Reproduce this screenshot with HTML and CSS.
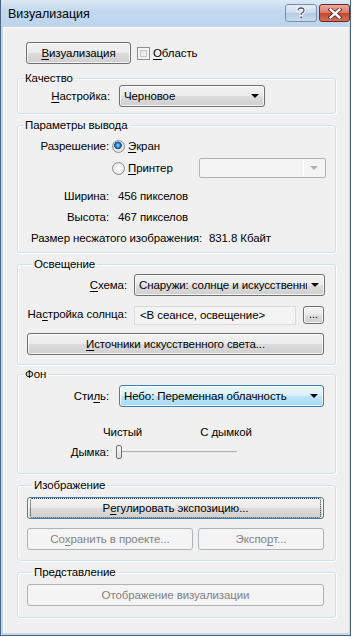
FILE: index.html
```html
<!DOCTYPE html>
<html lang="ru">
<head>
<meta charset="utf-8">
<title>Визуализация</title>
<link rel="stylesheet" href="styles.css">
</head>
<body>
<div class="window">
  <div class="titlebar">
    <span class="title">Визуализация</span>
    <div class="tbtns">
      <div class="tbtn help"><svg width="10" height="12" viewBox="0 0 10 12"><path d="M2 3.5 Q2 1 5 1 Q8 1 8 3.5 Q8 5 6 6 L5.2 6.6 L5.2 8" fill="none" stroke="#fff" stroke-width="3.2" stroke-linecap="round"/><path d="M2 3.5 Q2 1 5 1 Q8 1 8 3.5 Q8 5 6 6 L5.2 6.6 L5.2 8" fill="none" stroke="#3e5672" stroke-width="1.3"/><circle cx="5.2" cy="10.4" r="1.4" fill="#3e5672" stroke="#fff" stroke-width="0.8"/></svg></div>
      <div class="tbtn close"><svg width="14" height="11" viewBox="0 0 14 11"><path d="M2.5 1.5 L11.5 9.5 M11.5 1.5 L2.5 9.5" stroke="#5a1e14" stroke-width="4" stroke-linecap="square"/><path d="M2.5 1.5 L11.5 9.5 M11.5 1.5 L2.5 9.5" stroke="#fff" stroke-width="2.4" stroke-linecap="square"/></svg></div>
    </div>
  </div>
  <div class="client">
    <div class="toprow">
      <button class="btn mainbtn"><u>В</u>изуализация</button>
      <span class="check"></span><span class="checklabel"><u>О</u>бласть</span>
    </div>

    <fieldset class="grp g-quality">
      <legend>Качество</legend>
      <div class="row">
        <span class="lbl lbl-q"><u>Н</u>астройка:</span>
        <div class="combo combo-q"><span>Черновое</span><i class="arrow"></i></div>
      </div>
    </fieldset>

    <fieldset class="grp g-output">
      <legend>Параметры вывода</legend>
      <div class="row r-res">
        <span class="lbl lbl-o">Разрешение:</span>
        <span class="radio on"></span><span class="rlabel"><u>Э</u>кран</span>
      </div>
      <div class="row r-printer">
        <span class="lbl lbl-o"></span>
        <span class="radio"></span><span class="rlabel rl-printer"><u>П</u>ринтер</span>
        <div class="combo disabled combo-p"><span class="inner"></span><i class="arrow"></i></div>
      </div>
      <div class="row r-info r-w">
        <span class="lbl lbl-o">Ширина:</span><span class="val">456 пикселов</span>
      </div>
      <div class="row r-info">
        <span class="lbl lbl-o">Высота:</span><span class="val">467 пикселов</span>
      </div>
      <div class="row r-info r-size">
        <span>Размер несжатого изображения:</span><span class="val2">831.8 Кбайт</span>
      </div>
    </fieldset>

    <fieldset class="grp g-light">
      <legend>Освещение</legend>
      <div class="row">
        <span class="lbl lbl-l"><u>С</u>хема:</span>
        <div class="combo combo-l"><span>Снаружи: солнце и искусственнь</span><i class="arrow"></i></div>
      </div>
      <div class="row r-sun">
        <span class="lbl lbl-l lbl-sun">На<u>с</u>тройка солнца:</span>
        <div class="field">&lt;В сеансе, освещение&gt;</div>
        <button class="btn dots">...</button>
      </div>
      <button class="btn wide b-src"><u>И</u>сточники искусственного света...</button>
    </fieldset>

    <fieldset class="grp g-bg">
      <legend>Фон</legend>
      <div class="row">
        <span class="lbl lbl-b">Сти<u>л</u>ь:</span>
        <div class="combo focus combo-b"><span>Небо: Переменная облачность</span><i class="arrow"></i></div>
      </div>
      <div class="row r-scale">
        <span class="s1">Чистый</span><span class="s2">С дымкой</span>
      </div>
      <div class="row r-haze">
        <span class="lbl lbl-b">Дымка:</span>
        <div class="slider"><span class="thumb"></span><span class="track"></span></div>
      </div>
    </fieldset>

    <fieldset class="grp g-img">
      <legend>Изображение</legend>
      <button class="btn wide focused"><span class="focusrect">Р<u>е</u>гулировать экспозицию...</span></button>
      <div class="row r-two">
        <button class="btn dis b-save">Со<u>х</u>ранить в проекте...</button>
        <button class="btn dis b-exp">Экспо<u>р</u>т...</button>
      </div>
    </fieldset>

    <fieldset class="grp g-view">
      <legend>Представление</legend>
      <button class="btn wide dis">Отображение визуализации</button>
    </fieldset>
  </div>
</div>
</body>
</html>
```
FILE: styles.css
```css
* { box-sizing: border-box; }
html, body { margin: 0; padding: 0; background: #ffffff; }
body { font-family: "Liberation Sans", Arial, sans-serif; font-size: 11.5px; letter-spacing: -0.1px; color: #000; }
u { text-decoration: underline; text-underline-offset: 2px; }

.window {
  width: 351px; height: 636px;
  border-left: 1px solid #4a6582; border-right: 1px solid #4a6582; border-bottom: 1px solid #4a6582;
  background: #c2d7ee;
  padding: 0 1px 2px 2px;
  display: flex; flex-direction: column;
}
.titlebar {
  height: 27px; flex: none;
  display: flex; align-items: flex-start;
  background: linear-gradient(#dbe8f6, #c3d8ef 40%, #bed4ec);
  margin: 0 -1px 0 -2px; padding-left: 7px;
}
.title { font-size: 12.5px; letter-spacing: 0; line-height: 28px; color: #000; }
.tbtns { margin-left: auto; display: flex; gap: 2px; padding-top: 4px; margin-right: 0; }
.tbtn { height: 18px; width: 32px; border: 1px solid #6d7d92; border-radius: 3px; display: flex; align-items: center; justify-content: center; }
.help { background: linear-gradient(#e6eef8, #c9d9ec 50%, #b4c8e2 51%, #c8dbf0); border-color: #7b8ea8; }
.close { background: linear-gradient(#e9a99c, #d87b68 50%, #c7452f 51%, #d2735b); border-color: #6e2a20; width: 31px; }

.client {
  flex: 1; background: #f0f0f0;
  border-top: 1px solid #f9fbfd; border-left: 1px solid #fdfdfd;
  padding: 14px 13px 0 13px;
  display: flex; flex-direction: column;
}

.toprow { display: flex; align-items: center; padding-left: 9px; height: 22px; }
.btn {
  font: inherit; color: #000; letter-spacing: inherit;
  height: 22px; padding: 0;
  border: 1px solid #707070; border-radius: 3px;
  background: linear-gradient(#f2f2f2, #ebebeb 49%, #dddddd 50%, #cfcfcf);
  box-shadow: inset 0 0 0 1px rgba(255,255,255,0.75);
  display: flex; align-items: center; justify-content: center;
  white-space: nowrap;
}
.mainbtn { width: 105px; }
.check {
  width: 13px; height: 13px; margin-left: 6px;
  border: 1px solid #8e8f8f;
  background: linear-gradient(135deg, #dcdcdc, #fefefe);
  box-shadow: inset 0 0 0 2px #f4f4f4, inset 0 0 0 3px #c6c6c6;
}
.checklabel { margin-left: 3px; }

.grp {
  margin: 0; min-width: 0;
  border: 1px solid #d5dfe5; border-radius: 3px;
  box-shadow: inset 1px 1px 0 #fff, 1px 1px 0 #fff;
  padding: 0 9px;
}
.grp legend { padding: 0 2px; margin-left: 5px; line-height: 14px; }

.row { display: flex; align-items: center; white-space: nowrap; }
.lbl { text-align: right; flex: none; white-space: nowrap; }

.g-quality { margin-top: 7px; padding-bottom: 6px; padding-left: 0; }
.lbl-q { width: 92px; margin-right: 9px; }
.combo {
  height: 22px; border: 1px solid #707070; border-radius: 3px;
  background: linear-gradient(#f2f2f2, #ebebeb 49%, #dddddd 50%, #cfcfcf);
  box-shadow: inset 0 0 0 1px rgba(255,255,255,0.75);
  display: flex; align-items: center; padding-left: 4px; padding-right: 5px;
  white-space: nowrap; overflow: hidden;
}
.combo span { flex: 1; overflow: hidden; }
.arrow {
  flex: none; width: 0; height: 0;
  border-left: 4px solid transparent; border-right: 4px solid transparent; border-top: 4px solid #000;
  margin-left: 4px;
}
.combo-q { width: 146px; }
.combo.focus { border-color: #3c7fb1; background: linear-gradient(#eaf6fd, #d9f0fc 49%, #bee6fd 50%, #a7d9f5); }
.combo.disabled {
  height: 20px; border-color: #adb2b5; border-radius: 2px; background: #f4f4f4; box-shadow: none; padding: 1px;
}
.combo.disabled .inner { align-self: stretch; background: #f4f4f4; border-right: 1px solid #fff; }
.combo.disabled .arrow { border-top-color: #b0b0b0; margin: 0 6px 0 6px; }

.g-output { margin-top: 4px; padding-left: 0; padding-bottom: 6px; }
.lbl-o { width: 91px; }
.r-res { margin-top: 6px; height: 16px; }
.r-printer { margin-top: 4px; height: 20px; }
.radio {
  width: 13px; height: 13px; border-radius: 50%; margin-left: 3px; flex: none;
  border: 1px solid #8e8f8f;
  background: radial-gradient(circle at 50% 50%, #fefefe 0, #fefefe 2px, #e0e0e0 6px);
}
.radio.on {
  background: radial-gradient(circle at 45% 40%, #a6d9f4 0, #2d8fd6 2px, #16477c 3.6px, #f0f0f0 4.2px, #e4e4e4 6px);
}
.rlabel { margin-left: 3px; }
.rl-printer { width: 71px; }
.combo-p { width: 128px; }
.r-info { height: 16px; margin-top: 5px; }
.r-w { margin-top: 10px; }
.val { margin-left: 9px; }
.r-size { padding-left: 13px; }
.val2 { margin-left: 7px; }

.g-light { margin-top: 4px; padding-bottom: 9px; padding-left: 9px; }
.lbl-l { width: 100px; margin-right: 7px; }
.g-light .row:first-of-type { margin-top: 3px; }
.combo-l { width: 191px; }
.r-sun { margin-top: 9px; height: 20px; }
.lbl-sun { position: relative; top: -1px; }
.field {
  width: 162px; height: 19px; border: 1px solid #dadada; background: #f4f4f4;
  padding-left: 5px; line-height: 17px; white-space: nowrap;
}
.dots { width: 21px; height: 18px; margin-left: 7px; font-size: 11px; line-height: 10px; padding-bottom: 3px; }
.wide { width: 297px; }
.b-src { margin-top: 8px; }

.g-bg { margin-top: 2px; padding-bottom: 13px; padding-left: 0; }
.g-bg .row:first-of-type { margin-top: 4px; }
.lbl-b { width: 91px; margin-right: 10px; }
.combo-b { width: 205px; }
.r-scale { margin-top: 18px; height: 14px; }
.s1 { margin-left: 85px; }
.s2 { margin-left: 58px; }
.r-haze { margin-top: 5px; height: 16px; }
.slider { display: flex; align-items: center; margin-left: -3px; }
.thumb { width: 6px; height: 14px; border: 1px solid #707070; border-radius: 2px; background: linear-gradient(#fafafa, #dcdcdc); }
.track { width: 115px; height: 2px; border-top: 1px solid #b0b0b0; border-bottom: 1px solid #e8e8e8; }

.g-img { margin-top: 4px; padding-bottom: 10px; }
.g-img > .btn:first-of-type { margin-top: 5px; }
.focused { border-color: #3c7fb1; }
.focusrect { display: flex; align-items: center; justify-content: center; width: 100%; height: 100%; border: 1px dotted #333; border-radius: 2px; margin: 0 2px; }
.r-two { margin-top: 9px; gap: 5px; }
.dis {
  border-color: #adb2b5; background: #f4f4f4; box-shadow: none; color: #838383;
}
.b-save { width: 166px; }
.b-exp { width: 126px; }

.g-view { margin-top: 4px; padding-bottom: 11px; }
.g-view .btn { margin-top: 5px; }
```
